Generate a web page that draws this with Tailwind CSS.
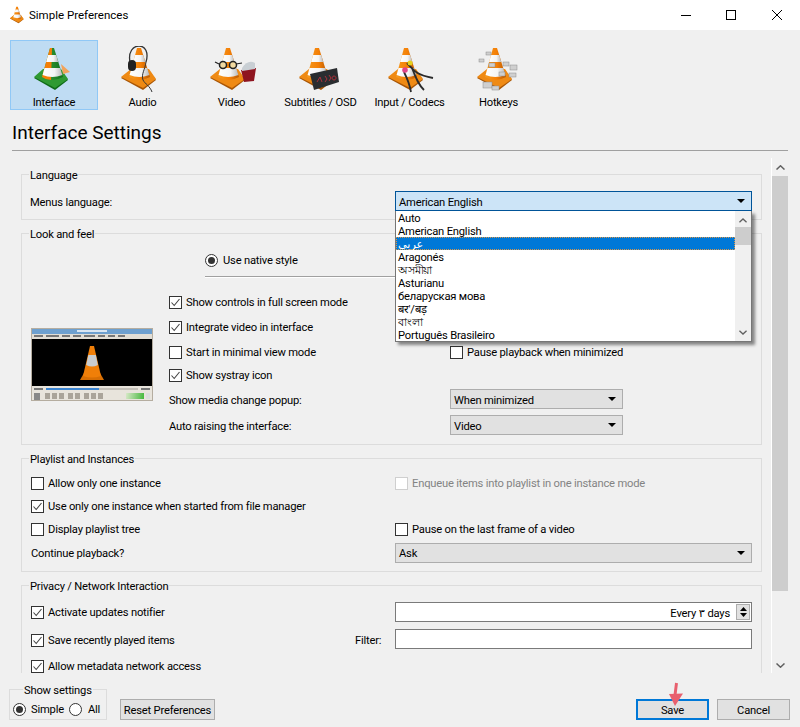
<!DOCTYPE html>
<html lang="en">
<head>
    <meta charset="UTF-8">
    <title>Simple Preferences</title>
    <script src="https://cdn.jsdelivr.net/npm/@tailwindcss/browser@4"></script>
</head>
<body class="bg-[#f0f0f0] font-['Roboto','DejaVu_Sans',sans-serif] text-[11.2px] tracking-[-0.2px] leading-4 text-black">
<svg class="absolute w-0 h-0">
    <defs>
        <linearGradient id="coneOrange" x1="0" x2="1" y1="0" y2="0">
            <stop offset="0" stop-color="#f59a1f"/><stop offset="0.55" stop-color="#f47f06"/><stop offset="1" stop-color="#b85a05"/>
        </linearGradient>
        <linearGradient id="coneWhite" x1="0" x2="1" y1="0" y2="0">
            <stop offset="0" stop-color="#ffffff"/><stop offset="0.6" stop-color="#f4f4f4"/><stop offset="1" stop-color="#b9b9b9"/>
        </linearGradient>
        <linearGradient id="coneGreen" x1="0" x2="1" y1="0" y2="0">
            <stop offset="0" stop-color="#3aa83c"/><stop offset="1" stop-color="#146f1d"/>
        </linearGradient>
    </defs>
    <symbol id="cone" viewBox="0 0 48 48">
        <path d="M2 32L12 24H30L37 34L24 44Z" fill="#a85505"/>
        <path d="M2 31L12 23H30L37 33L24 42Z" fill="#ef8a14"/>
        <path d="M18 2H22L31 31Q20 37 10 31Z" fill="url(#coneOrange)"/>
        <path d="M16.1 9H24.2L26.3 16H14.1Z" fill="url(#coneWhite)"/>
        <path d="M12.5 22H28.2L30.4 29Q20 33 10.6 29Z" fill="url(#coneWhite)"/>
    </symbol>
</svg>

<div class="relative w-[800px] h-[727px] overflow-hidden flex flex-col">
    <!-- title bar -->
    <div class="h-[30px] bg-white flex items-center shrink-0">
        <svg class="ml-[8px] w-[18px] h-[18px]" viewBox="0 0 40 46"><use href="#cone" width="48" height="48"/></svg>
        <span class="ml-[3px] text-[11.5px] tracking-normal">Simple Preferences</span>
        <div class="ml-auto flex h-full">
            <div class="w-[45px] flex items-center justify-center"><div class="w-[10px] h-px bg-black"></div></div>
            <div class="w-[46px] flex items-center justify-center"><div class="w-[10px] h-[10px] border border-black"></div></div>
            <div class="w-[46px] flex items-center justify-center">
                <svg class="w-[10px] h-[10px]" viewBox="0 0 10 10"><path d="M0 0L10 10M10 0L0 10" stroke="#000" stroke-width="1"/></svg>
            </div>
        </div>
    </div>

    <!-- category toolbar -->
    <div class="flex pl-[10px] pt-[10px] h-[80px] shrink-0">
        <div class="w-[88px] h-[70px] bg-[#bfdcf3] border border-[#90c8f6] flex flex-col items-center">
            <svg class="mt-[5px] w-[48px] h-[48px] shrink-0" viewBox="0 0 48 48">
                <path d="M4 32L13 24H31L38 34L25 44Z" fill="#0f6b18"/>
                <path d="M4 31L13 23H31L38 33L25 42Z" fill="#2f9a32"/>
                <path d="M20 2H24L33 31Q22 37 12 31Z" fill="url(#coneGreen)"/>
                <path d="M20 2H22L21 34Q16 34 12 31Z" fill="#f47f06"/>
                <path d="M18.1 9H26.2L28.3 16H16.1Z" fill="url(#coneWhite)"/>
                <path d="M14.5 22H30.2L32.4 29Q22 33 12.6 29Z" fill="url(#coneWhite)"/>
                <path d="M31 18L40 26L33 28Z" fill="#f2a35a"/>
            </svg>
            <span class="mt-[1px]">Interface</span>
        </div>
        <div class="w-[89px] h-[70px] flex flex-col items-center">
            <svg class="mt-[6px] w-[48px] h-[48px] shrink-0" viewBox="0 0 48 48">
                <use href="#cone" width="48" height="48"/>
                <path d="M11 16C9 6 14 0 20 0C26 0 30 6 27 16" fill="none" stroke="#333" stroke-width="1.300"/>
                <rect x="9" y="14" width="8" height="11" rx="4" fill="#222"/>
                <path d="M27 16C26 24 22 28 24 34C26 38 31 40 33 46" fill="none" stroke="#333" stroke-width="1"/>
            </svg>
            <span class="mt-px">Audio</span>
        </div>
        <div class="w-[89px] h-[70px] flex flex-col items-center">
            <svg class="mt-[6px] w-[48px] h-[48px] shrink-0" viewBox="0 0 48 48">
                <use href="#cone" width="48" height="48"/>
                <path d="M33 24L48 22L46 35L36 36Z" fill="#8f1520"/>
                <path d="M34 22Q40 13 47 17L47 23L34 25Z" fill="#c9cfd4"/>
                <circle cx="25" cy="19" r="3.5" fill="#f1d9a0" stroke="#222" stroke-width="1.5"/>
                <circle cx="15" cy="19" r="3.5" fill="#f1d9a0" stroke="#222" stroke-width="1.5"/>
                <path d="M11 18L7 16M28 18L34 17" stroke="#222" stroke-width="1.2"/>
            </svg>
            <span class="mt-px">Video</span>
        </div>
        <div class="w-[89px] h-[70px] flex flex-col items-center">
            <svg class="mt-[6px] w-[48px] h-[48px] shrink-0" viewBox="0 0 48 48">
                <use href="#cone" width="48" height="48"/>
                <path d="M13 28L40 22L42 36L17 44Z" fill="#2a2d30"/>
                <path d="M20 36L23 31L25 36M28 30L30 33L28 36M32 29L34 32L32 35M37 30A2 2 0 1 0 37.100 30" fill="none" stroke="#a9303a" stroke-width="1"/>
            </svg>
            <span class="mt-px">Subtitles / OSD</span>
        </div>
        <div class="w-[89px] h-[70px] flex flex-col items-center">
            <svg class="mt-[6px] w-[48px] h-[48px] shrink-0" viewBox="0 0 48 48">
                <use href="#cone" width="48" height="48"/>
                <path d="M21 17C28 24 28 28 47 32M18 26C22 34 24 40 25 46M26 22C30 32 32 38 38 44" fill="none" stroke="#2b2b2b" stroke-width="1.8"/>
                <circle cx="24" cy="17" r="2.5" fill="#e6d21d"/>
                <circle cx="19" cy="24" r="2.8" fill="#e0458a"/>
            </svg>
            <span class="mt-px">Input / Codecs</span>
        </div>
        <div class="w-[89px] h-[70px] flex flex-col items-center">
            <svg class="mt-[6px] w-[48px] h-[48px] shrink-0" viewBox="0 0 48 48">
                <use href="#cone" width="48" height="48"/>
                <g fill="#cfcfcf" stroke="#8b8b8b" stroke-width="0.5">
                    <rect x="11" y="6" width="5" height="3"/><rect x="4" y="13" width="5" height="3"/>
                    <rect x="14" y="17" width="6" height="4"/><rect x="28" y="16" width="6" height="4"/>
                    <rect x="35" y="19" width="7" height="5"/><rect x="24" y="26" width="6" height="4"/>
                    <rect x="34" y="27" width="7" height="4"/><rect x="8" y="36" width="9" height="6"/><rect x="17" y="40" width="7" height="4"/>
                </g>
            </svg>
            <span class="mt-px">Hotkeys</span>
        </div>
    </div>

    <h1 class="ml-[12px] mt-[13px] h-[20px] text-[19px] tracking-normal leading-5 font-normal shrink-0">Interface Settings</h1>
    <div class="ml-[12px] mr-[12px] mt-[7px] h-px bg-[#a0a0a0] shrink-0"></div>

    <!-- scrolling settings panel -->
    <div class="relative h-[522px] shrink-0 overflow-hidden flex pl-[21px]">
        <div class="w-[741px] pt-[23px] flex flex-col gap-[13px] shrink-0">

            <!-- Language -->
            <div class="relative border border-[#dcdcdc] h-[46px] shrink-0 pt-[16px] pl-[8px] flex">
                <span class="absolute -top-[7px] left-[7px] bg-[#f0f0f0] px-px">Language</span>
                <span class="w-[365px] h-[20px] pt-[4px] flex items-center">Menus language:</span>
            </div>

            <!-- Look and feel -->
            <div class="relative border border-[#dcdcdc] h-[212px] shrink-0 pt-[16px]">
                <span class="absolute -top-[7px] left-[7px] bg-[#f0f0f0] px-px">Look and feel</span>
                <div class="ml-[183px] h-[20px] flex items-center">
                    <span class="w-[13px] h-[13px] rounded-full border border-[#333] bg-white flex items-center justify-center"><span class="w-[7px] h-[7px] rounded-full bg-[#333]"></span></span>
                    <span class="ml-[5px] pt-[2px]">Use native style</span>
                </div>
                <div class="ml-[183px] mt-[6px] w-[300px] h-[2px] border-t border-[#a0a0a0] border-b-white border-b"></div>
                <div class="flex mt-[14px]">
                    <div class="ml-[9px] mt-[36px] w-[122px] h-[73px] shrink-0 bg-[#e8e4dc] border border-[#b5ada0] flex flex-col">
                        <div class="h-[5px] bg-[#6ea0cf] flex justify-center"><span class="w-[30px] h-[2px] mt-[1px] bg-[#dbe7f2]"></span></div>
                        <div class="h-[5px] bg-[#e2ded5] flex gap-[3px] pl-[2px] pt-[1px]">
                            <span class="w-[9px] h-[2px] bg-[#777]"></span><span class="w-[13px] h-[2px] bg-[#777]"></span><span class="w-[8px] h-[2px] bg-[#777]"></span><span class="w-[8px] h-[2px] bg-[#777]"></span><span class="w-[11px] h-[2px] bg-[#777]"></span><span class="w-[7px] h-[2px] bg-[#777]"></span><span class="w-[7px] h-[2px] bg-[#777]"></span><span class="w-[7px] h-[2px] bg-[#777]"></span>
                        </div>
                        <div class="h-[47px] bg-black flex items-center justify-center">
                            <svg class="w-[30px] h-[36px]" viewBox="0 0 30 36">
                                <path d="M3 35L7 28H23L27 35Z" fill="#d86f04"/>
                                <path d="M13 1H17L24 31Q15 34 6 31Z" fill="#f07f08"/>
                                <path d="M11.300 10H18.900L20.800 20Q15 23 9.200 20Z" fill="#c9cdd0"/>
                            </svg>
                        </div>
                        <div class="flex items-center h-[6px] px-[2px] gap-[3px]">
                            <span class="w-[9px] h-[2px] bg-[#777]"></span>
                            <div class="flex-1 h-[2px] bg-[#c4c0b8]"><div class="w-[58%] h-full bg-[#3b84d1]"></div></div>
                            <span class="w-[9px] h-[2px] bg-[#777]"></span>
                        </div>
                        <div class="flex-1 flex items-center px-[2px] gap-[2px]">
                            <span class="w-[6px] h-[7px] bg-[#888]"></span>
                            <span class="ml-[3px] w-[5px] h-[6px] bg-[#aaa49a]"></span><span class="w-[5px] h-[6px] bg-[#aaa49a]"></span><span class="w-[5px] h-[6px] bg-[#aaa49a]"></span>
                            <span class="ml-[2px] w-[5px] h-[6px] bg-[#aaa49a]"></span><span class="w-[5px] h-[6px] bg-[#aaa49a]"></span>
                            <span class="ml-[2px] w-[5px] h-[6px] bg-[#aaa49a]"></span><span class="w-[5px] h-[6px] bg-[#aaa49a]"></span><span class="w-[5px] h-[6px] bg-[#aaa49a]"></span>
                            <span class="ml-auto w-[18px] h-[6px] bg-[linear-gradient(100deg,#d8e8c8,#44b83c)]"></span>
                            <span class="w-[4px] h-[6px] bg-[#ddd]"></span>
                        </div>
                    </div>
                    <div class="ml-[16px] flex-1 flex flex-col">
                        <label class="h-[20px] flex items-center"><span class="w-[13px] h-[13px] border border-[#333] bg-white flex items-center justify-center"><svg class="w-[11px] h-[11px]" viewBox="0 0 11 11"><path d="M1.500 5.500L4.200 8.500L9.500 2" fill="none" stroke="#444" stroke-width="1.100"/></svg></span><span class="ml-[4px] pt-[2px]">Show controls in full screen mode</span></label>
                        <label class="mt-[5px] h-[20px] flex items-center"><span class="w-[13px] h-[13px] border border-[#333] bg-white flex items-center justify-center"><svg class="w-[11px] h-[11px]" viewBox="0 0 11 11"><path d="M1.500 5.500L4.200 8.500L9.500 2" fill="none" stroke="#444" stroke-width="1.100"/></svg></span><span class="ml-[4px] pt-[2px]">Integrate video in interface</span></label>
                        <div class="mt-[5px] h-[20px] flex items-center">
                            <span class="w-[13px] h-[13px] border border-[#333] bg-white"></span><span class="ml-[4px] pt-[2px] w-[264px]">Start in minimal view mode</span>
                            <span class="w-[13px] h-[13px] border border-[#333] bg-white"></span><span class="ml-[4px] pt-[2px]">Pause playback when minimized</span>
                        </div>
                        <label class="mt-[3px] h-[20px] flex items-center"><span class="w-[13px] h-[13px] border border-[#333] bg-white flex items-center justify-center"><svg class="w-[11px] h-[11px]" viewBox="0 0 11 11"><path d="M1.500 5.500L4.200 8.500L9.500 2" fill="none" stroke="#444" stroke-width="1.100"/></svg></span><span class="ml-[4px] pt-[2px]">Show systray icon</span></label>
                        <div class="mt-[4px] h-[20px] flex items-center">
                            <span class="w-[281px] pt-[4px]">Show media change popup:</span>
                            <div class="w-[173px] h-[20px] pt-[4px] bg-[#e1e1e1] border border-[#adadad] flex items-center pl-[3px]">When minimized<svg class="ml-auto mr-[6px] mb-[4px] w-[8px] h-[4px]" viewBox="0 0 8 4"><path d="M0 0H8L4 4Z" fill="#000"/></svg></div>
                        </div>
                        <div class="mt-[6px] h-[20px] flex items-center">
                            <span class="w-[281px] pt-[4px]">Auto raising the interface:</span>
                            <div class="w-[173px] h-[20px] pt-[4px] bg-[#e1e1e1] border border-[#adadad] flex items-center pl-[3px]">Video<svg class="ml-auto mr-[6px] mb-[4px] w-[8px] h-[4px]" viewBox="0 0 8 4"><path d="M0 0H8L4 4Z" fill="#000"/></svg></div>
                        </div>
                    </div>
                </div>
            </div>

            <!-- Playlist and Instances -->
            <div class="relative border border-[#dcdcdc] h-[114px] shrink-0 pt-[14px]">
                <span class="absolute -top-[7px] left-[7px] bg-[#f0f0f0] px-px">Playlist and Instances</span>
                <div class="h-[20px] flex items-center pl-[9px]">
                    <span class="w-[13px] h-[13px] border border-[#333] bg-white"></span><span class="ml-[4px] pt-[2px] w-[347px]">Allow only one instance</span>
                    <span class="w-[13px] h-[13px] border border-[#cfcfcf] bg-white"></span><span class="ml-[4px] pt-[2px] text-[#838383]">Enqueue items into playlist in one instance mode</span>
                </div>
                <div class="mt-[3px] h-[20px] flex items-center pl-[9px]">
                    <span class="w-[13px] h-[13px] border border-[#333] bg-white flex items-center justify-center"><svg class="w-[11px] h-[11px]" viewBox="0 0 11 11"><path d="M1.500 5.500L4.200 8.500L9.500 2" fill="none" stroke="#444" stroke-width="1.100"/></svg></span><span class="ml-[4px] pt-[2px]">Use only one instance when started from file manager</span>
                </div>
                <div class="mt-[3px] h-[20px] flex items-center pl-[9px]">
                    <span class="w-[13px] h-[13px] border border-[#333] bg-white"></span><span class="ml-[4px] pt-[2px] w-[347px]">Display playlist tree</span>
                    <span class="w-[13px] h-[13px] border border-[#333] bg-white"></span><span class="ml-[4px] pt-[2px]">Pause on the last frame of a video</span>
                </div>
                <div class="mt-[4px] h-[20px] flex items-center pl-[9px]">
                    <span class="w-[364px] pt-[2px]">Continue playback?</span>
                    <div class="w-[357px] h-[20px] pt-[2px] bg-[#e1e1e1] border border-[#adadad] flex items-center pl-[3px]">Ask<svg class="ml-auto mr-[6px] mb-[2px] w-[8px] h-[4px]" viewBox="0 0 8 4"><path d="M0 0H8L4 4Z" fill="#000"/></svg></div>
                </div>
            </div>

            <!-- Privacy / Network Interaction -->
            <div class="relative border border-[#dcdcdc] h-[120px] shrink-0 pt-[16px]">
                <span class="absolute -top-[7px] left-[7px] bg-[#f0f0f0] px-px">Privacy / Network Interaction</span>
                <div class="h-[20px] flex items-center pl-[9px]">
                    <span class="w-[13px] h-[13px] border border-[#333] bg-white flex items-center justify-center"><svg class="w-[11px] h-[11px]" viewBox="0 0 11 11"><path d="M1.500 5.500L4.200 8.500L9.500 2" fill="none" stroke="#444" stroke-width="1.100"/></svg></span><span class="ml-[4px] pt-[2px] w-[347px]">Activate updates notifier</span>
                    <div class="w-[357px] h-[20px] bg-white border border-[#7a7a7a] flex items-center justify-end pr-[1px]">
                        <span dir="ltr" class="mr-[6px] pt-[4px]">Every ٣ days</span>
                        <div class="w-[14px] h-[16px] bg-[#e1e1e1] border border-[#adadad] flex flex-col items-center justify-center gap-[2px]">
                            <svg class="w-[7px] h-[4px]" viewBox="0 0 7 4"><path d="M3.500 0L7 4H0Z" fill="#000"/></svg>
                            <svg class="w-[7px] h-[4px]" viewBox="0 0 7 4"><path d="M0 0H7L3.500 4Z" fill="#000"/></svg>
                        </div>
                    </div>
                </div>
                <div class="mt-[8px] h-[20px] flex items-center pl-[9px]">
                    <span class="w-[13px] h-[13px] border border-[#333] bg-white flex items-center justify-center"><svg class="w-[11px] h-[11px]" viewBox="0 0 11 11"><path d="M1.500 5.500L4.200 8.500L9.500 2" fill="none" stroke="#444" stroke-width="1.100"/></svg></span><span class="ml-[4px] pt-[2px] w-[307px]">Save recently played items</span>
                    <span class="w-[40px] pt-[2px]">Filter:</span>
                    <div class="mb-[2px] w-[357px] h-[20px] bg-white border border-[#7a7a7a]"></div>
                </div>
                <div class="mt-[6px] h-[20px] flex items-center pl-[9px]">
                    <span class="w-[13px] h-[13px] border border-[#333] bg-white flex items-center justify-center"><svg class="w-[11px] h-[11px]" viewBox="0 0 11 11"><path d="M1.500 5.500L4.200 8.500L9.500 2" fill="none" stroke="#444" stroke-width="1.100"/></svg></span><span class="ml-[4px] pt-[2px]">Allow metadata network access</span>
                </div>
            </div>
        </div>

        <!-- panel scrollbar -->
        <div class="ml-[9px] mt-[7px] w-[17px] bg-[#f0f0f0] border-l border-white flex flex-col items-center shrink-0">
            <svg class="mt-[7px] w-[9px] h-[5px]" viewBox="0 0 9 5"><path d="M0.500 4.500L4.500 0.800L8.500 4.500" fill="none" stroke="#606060" stroke-width="1.500"/></svg>
            <div class="mt-[6px] w-full h-[415px] bg-[#cdcdcd]"></div>
            <svg class="mt-auto mb-[5px] w-[9px] h-[5px]" viewBox="0 0 9 5"><path d="M0.500 0.500L4.500 4.200L8.500 0.500" fill="none" stroke="#606060" stroke-width="1.500"/></svg>
        </div>

        <!-- open language combo, lies over the groups -->
        <div class="absolute left-[395px] top-[40px] w-[357px]">
            <div class="h-[20px] pt-[4px] bg-[#cce4f7] border border-[#005499] flex items-center pl-[3px]">American English<svg class="ml-auto mr-[6px] mb-[4px] w-[8px] h-[4px]" viewBox="0 0 8 4"><path d="M0 0H8L4 4Z" fill="#000"/></svg></div>
            <div class="h-[131px] bg-white border border-[#767676] border-t-0 shadow-[3px_3px_3px_rgba(0,0,0,0.45)] flex">
                <div class="flex-1 flex flex-col leading-[13px]">
                    <div class="h-[13px] pt-px pl-[2px]">Auto</div>
                    <div class="h-[13px] pt-px pl-[2px]">American English</div>
                    <div class="h-[13px] pt-px pl-[2px] bg-[#0078d7] text-white outline-1 outline-dotted outline-offset-[-1px] outline-[#d8964a]">عربي</div>
                    <div class="h-[13px] pt-px pl-[2px]">Aragonés</div>
                    <div class="h-[13px] pt-px pl-[2px]">অসমীয়া</div>
                    <div class="h-[13px] pt-px pl-[2px]">Asturianu</div>
                    <div class="h-[13px] pt-px pl-[2px]">беларуская мова</div>
                    <div class="h-[13px] pt-px pl-[2px]">बर'/बड़</div>
                    <div class="h-[13px] pt-px pl-[2px]">বাংলা</div>
                    <div class="h-[13px] pt-px pl-[2px]">Português Brasileiro</div>
                </div>
                <div class="w-[16px] bg-[#f0f0f0] flex flex-col items-center">
                    <svg class="mt-[7px] w-[8px] h-[5px]" viewBox="0 0 9 5"><path d="M0.500 4.500L4.500 0.800L8.500 4.500" fill="none" stroke="#606060" stroke-width="1.500"/></svg>
                    <div class="mt-[4px] w-full h-[18px] bg-[#cdcdcd]"></div>
                    <svg class="mt-auto mb-[6px] w-[8px] h-[5px]" viewBox="0 0 9 5"><path d="M0.500 0.500L4.500 4.200L8.500 0.500" fill="none" stroke="#606060" stroke-width="1.500"/></svg>
                </div>
            </div>
        </div>
    </div>

    <!-- bottom buttons -->
    <div class="flex-1 flex items-end pb-[7px] pl-[9px] pr-[10px]">
        <div class="relative w-[98px] h-[31px] border border-[#dcdcdc] flex items-center pt-[9px] pl-[3px]">
            <span class="absolute -top-[7px] left-[13px] bg-[#f0f0f0] px-px">Show settings</span>
            <span class="w-[13px] h-[13px] rounded-full border border-[#333] bg-white flex items-center justify-center"><span class="w-[7px] h-[7px] rounded-full bg-[#333]"></span></span>
            <span class="ml-[5px] pt-[2px] w-[30px]">Simple</span>
            <span class="ml-[8px] w-[13px] h-[13px] rounded-full border border-[#333] bg-white"></span>
            <span class="ml-[6px] pt-[2px]">All</span>
        </div>
        <button class="ml-[13px] w-[95px] h-[21px] pt-[2px] bg-[#e1e1e1] border border-[#adadad] whitespace-nowrap">Reset Preferences</button>
        <button class="ml-auto w-[73px] h-[21px] pt-[2px] bg-[#e1e1e1] border-2 border-[#0078d7]">Save</button>
        <button class="ml-[8px] w-[73px] h-[21px] pt-[2px] bg-[#e1e1e1] border border-[#adadad]">Cancel</button>
    </div>

    <!-- annotation arrow over the Save button -->
    <svg class="absolute left-[664px] top-[680px] w-[24px] h-[30px]" viewBox="0 0 24 30">
        <path d="M12.500 3L11 15" stroke="#e8606e" stroke-width="3"/>
        <path d="M5 14L19 13.500L11 26Z" fill="#e8606e"/>
    </svg>
</div>
</body>
</html>
